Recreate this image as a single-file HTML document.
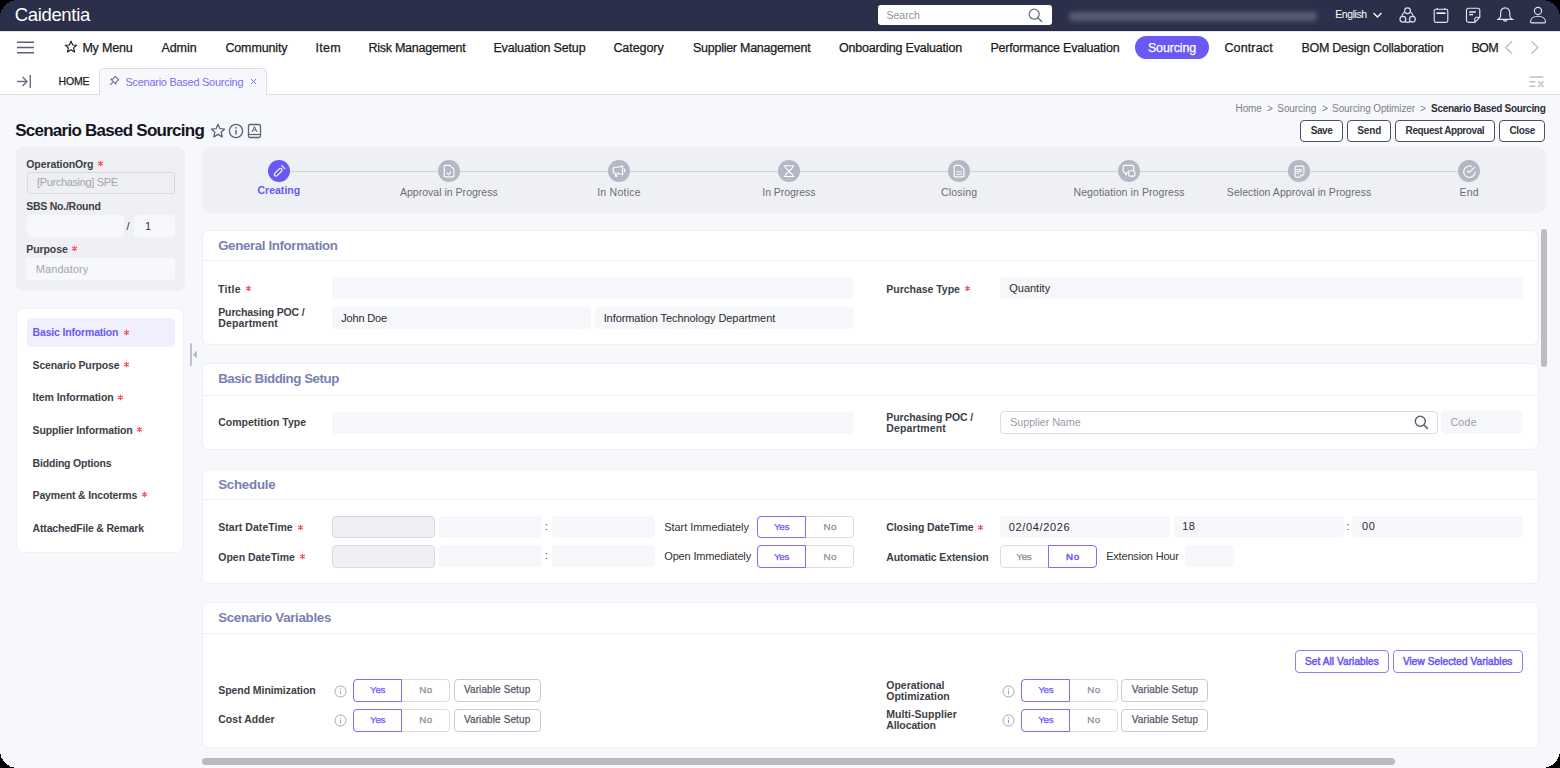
<!DOCTYPE html>
<html><head><meta charset="utf-8"><style>
html,body{margin:0;padding:0;background:#000;width:1560px;height:768px;overflow:hidden}
.app{position:absolute;left:0;top:0;width:1560px;height:768px;overflow:hidden;background:#f7f8fc;font-family:"Liberation Sans",sans-serif}
.t{position:absolute;white-space:nowrap}
.r{position:absolute}
</style></head><body><div class="app">
<div class="r" style="left:0.00px;top:0.00px;width:1560.00px;height:31.00px;background:#2c2f4a;"></div>
<div class="r" style="left:0.00px;top:30.00px;width:1560.00px;height:1.00px;background:#25283f;"></div>
<div class="t" style="left:14.67px;top:5.94px;font-size:18.5px;line-height:18.5px;color:#ffffff;letter-spacing:-0.327px;">Caidentia</div>
<div class="r" style="left:877.80px;top:4.90px;width:174.50px;height:20.30px;background:#ffffff;border-radius:3px;"></div>
<div class="t" style="left:886.48px;top:9.91px;font-size:10.5px;line-height:10.5px;color:#8c90a0;">Search</div>
<svg class="r" style="left:1028px;top:8px" width="15" height="15" viewBox="0 0 15 15"><circle cx="6.2" cy="6.2" r="5" fill="none" stroke="#6a6f84" stroke-width="1.3"/><line x1="9.8" y1="9.8" x2="13.6" y2="13.6" stroke="#6a6f84" stroke-width="1.4" stroke-linecap="round"/></svg>
<div class="r" style="left:1069px;top:11.5px;width:248px;height:9px;background:#5a5d75;filter:blur(2.5px);border-radius:3px"></div>
<div class="t" style="left:1335.27px;top:9.41px;font-size:10.5px;line-height:10.5px;color:#ffffff;letter-spacing:-0.415px;">English</div>
<svg class="r" style="left:1372px;top:11px" width="11" height="8" viewBox="0 0 11 8"><polyline points="1.5,2 5.5,6 9.5,2" fill="none" stroke="#fff" stroke-width="1.3"/></svg>
<svg class="r" style="left:1398px;top:6px" width="20" height="18" viewBox="0 0 20 18"><circle cx="9.5" cy="10.8" r="5.6" fill="none" stroke="#e4e5ea" stroke-width="1.15"/><circle cx="9.5" cy="4.7" r="2.9" fill="#2c2f4a" stroke="#e4e5ea" stroke-width="1.15"/><circle cx="4.9" cy="13.2" r="2.9" fill="#2c2f4a" stroke="#e4e5ea" stroke-width="1.15"/><circle cx="14.4" cy="13.2" r="2.9" fill="#2c2f4a" stroke="#e4e5ea" stroke-width="1.15"/></svg>
<svg class="r" style="left:1432px;top:6px" width="18" height="18" viewBox="0 0 18 18"><rect x="2.2" y="3.2" width="13.6" height="13.2" rx="1.8" fill="none" stroke="#e4e5ea" stroke-width="1.15"/><line x1="4.5" y1="7.2" x2="13.5" y2="7.2" stroke="#fff" stroke-width="1.6"/><line x1="5.2" y1="2" x2="5.2" y2="3.6" fill="none" stroke="#e4e5ea" stroke-width="1.15"/><line x1="12.8" y1="2" x2="12.8" y2="3.6" fill="none" stroke="#e4e5ea" stroke-width="1.15"/></svg>
<svg class="r" style="left:1465px;top:6px" width="17" height="18" viewBox="0 0 17 18"><path d="M3.5,2.2 H12.8 A2,2 0 0 1 14.8,4.2 V11.2 L9.8,16.3 H3.5 A2,2 0 0 1 1.5,14.3 V4.2 A2,2 0 0 1 3.5,2.2 Z" fill="none" stroke="#e4e5ea" stroke-width="1.15"/><path d="M14.8,11.2 H11.8 A2,2 0 0 0 9.8,13.2 V16.3" fill="none" stroke="#e4e5ea" stroke-width="1.15"/><line x1="4.3" y1="6" x2="10.8" y2="6" stroke="#fff" stroke-width="1.4"/><line x1="4.3" y1="8.6" x2="8" y2="8.6" stroke="#fff" stroke-width="1.4"/></svg>
<svg class="r" style="left:1497px;top:6px" width="17" height="18" viewBox="0 0 17 18"><path d="M8.2,1.8 C5.2,1.8 3.6,4.2 3.6,7.4 V9.8 C3.6,11.4 2.4,12.6 1.2,13.3 H15.2 C14,12.6 12.8,11.4 12.8,9.8 V7.4 C12.8,4.2 11.2,1.8 8.2,1.8 Z" fill="none" stroke="#e4e5ea" stroke-width="1.15"/><path d="M6.5,13.5 A1.7,1.7 0 0 0 9.9,13.5" fill="none" stroke="#e4e5ea" stroke-width="1.15"/></svg>
<svg class="r" style="left:1529px;top:5px" width="18" height="20" viewBox="0 0 18 20"><circle cx="9" cy="5.9" r="3.6" fill="none" stroke="#e4e5ea" stroke-width="1.15"/><path d="M1.5,16.8 C1.5,13.1 5,11.2 9,11.2 C13,11.2 16.5,13.1 16.5,16.8 C16.5,17.5 16,17.9 15.3,17.9 H2.7 C2,17.9 1.5,17.5 1.5,16.8 Z" fill="none" stroke="#e4e5ea" stroke-width="1.15"/></svg>
<div class="r" style="left:0.00px;top:31.00px;width:1560.00px;height:32.00px;background:#ffffff;"></div>
<div class="r" style="left:0.00px;top:31.00px;width:1560.00px;height:1.00px;background:#e4e5ea;"></div>
<svg class="r" style="left:17px;top:41px" width="18" height="13" viewBox="0 0 18 13"><path d="M0,1.2 H17 M0,6.5 H17 M0,11.8 H17" stroke="#5b6075" stroke-width="1.5"/></svg>
<svg class="r" style="left:64px;top:40px" width="14" height="14" viewBox="0 0 14 14"><path d="M7,1.2 L8.7,5 L12.7,5.3 L9.6,7.9 L10.6,11.9 L7,9.7 L3.4,11.9 L4.4,7.9 L1.3,5.3 L5.3,5 Z" fill="none" stroke="#222" stroke-width="1.2" stroke-linejoin="round"/></svg>
<div class="t" style="left:82.38px;top:41.72px;font-size:12.5px;line-height:12.5px;color:#1a1b24;letter-spacing:-0.192px;-webkit-text-stroke:0.25px currentColor;">My Menu</div>
<div class="t" style="left:161.38px;top:41.72px;font-size:12.5px;line-height:12.5px;color:#1a1b24;letter-spacing:-0.045px;-webkit-text-stroke:0.25px currentColor;">Admin</div>
<div class="t" style="left:225.38px;top:41.72px;font-size:12.5px;line-height:12.5px;color:#1a1b24;letter-spacing:-0.120px;-webkit-text-stroke:0.25px currentColor;">Community</div>
<div class="t" style="left:315.38px;top:41.72px;font-size:12.5px;line-height:12.5px;color:#1a1b24;letter-spacing:0.314px;-webkit-text-stroke:0.25px currentColor;">Item</div>
<div class="t" style="left:368.38px;top:41.72px;font-size:12.5px;line-height:12.5px;color:#1a1b24;letter-spacing:-0.249px;-webkit-text-stroke:0.25px currentColor;">Risk Management</div>
<div class="t" style="left:493.38px;top:41.72px;font-size:12.5px;line-height:12.5px;color:#1a1b24;letter-spacing:-0.151px;-webkit-text-stroke:0.25px currentColor;">Evaluation Setup</div>
<div class="t" style="left:613.38px;top:41.72px;font-size:12.5px;line-height:12.5px;color:#1a1b24;letter-spacing:-0.067px;-webkit-text-stroke:0.25px currentColor;">Category</div>
<div class="t" style="left:692.98px;top:41.72px;font-size:12.5px;line-height:12.5px;color:#1a1b24;letter-spacing:-0.258px;-webkit-text-stroke:0.25px currentColor;">Supplier Management</div>
<div class="t" style="left:839.08px;top:41.72px;font-size:12.5px;line-height:12.5px;color:#1a1b24;letter-spacing:-0.206px;-webkit-text-stroke:0.25px currentColor;">Onboarding Evaluation</div>
<div class="t" style="left:990.38px;top:41.72px;font-size:12.5px;line-height:12.5px;color:#1a1b24;letter-spacing:-0.198px;-webkit-text-stroke:0.25px currentColor;">Performance Evaluation</div>
<div class="t" style="left:1224.38px;top:41.72px;font-size:12.5px;line-height:12.5px;color:#1a1b24;letter-spacing:0.144px;-webkit-text-stroke:0.25px currentColor;">Contract</div>
<div class="t" style="left:1301.38px;top:41.72px;font-size:12.5px;line-height:12.5px;color:#1a1b24;letter-spacing:-0.249px;-webkit-text-stroke:0.25px currentColor;">BOM Design Collaboration</div>
<div class="t" style="left:1471.38px;top:41.72px;font-size:12.5px;line-height:12.5px;color:#1a1b24;letter-spacing:-0.611px;-webkit-text-stroke:0.25px currentColor;">BOM</div>
<div class="r" style="left:1135.00px;top:36.30px;width:74.00px;height:22.70px;background:#6a58f4;border-radius:11.4px;"></div>
<div class="t" style="left:1147.88px;top:41.72px;font-size:12.5px;line-height:12.5px;color:#ffffff;letter-spacing:-0.141px;-webkit-text-stroke:0.25px currentColor;">Sourcing</div>
<svg class="r" style="left:1504px;top:40px" width="10" height="15" viewBox="0 0 10 15"><polyline points="8,1.2 1.8,7.5 8,13.7" fill="none" stroke="#bfc3cf" stroke-width="1.6"/></svg>
<svg class="r" style="left:1530px;top:40px" width="10" height="15" viewBox="0 0 10 15"><polyline points="1.5,1.2 7.7,7.5 1.5,13.7" fill="none" stroke="#bfc3cf" stroke-width="1.6"/></svg>
<div class="r" style="left:0.00px;top:63.00px;width:1560.00px;height:32.00px;background:#ffffff;"></div>
<div class="r" style="left:0.00px;top:94.00px;width:1560.00px;height:1.00px;background:#dfe0e7;"></div>
<svg class="r" style="left:16px;top:74px" width="16" height="15" viewBox="0 0 16 15"><path d="M1,7.5 H11 M6.5,3 L11,7.5 L6.5,12" fill="none" stroke="#6b7085" stroke-width="1.4"/><line x1="14.3" y1="1" x2="14.3" y2="14" stroke="#6b7085" stroke-width="1.4"/></svg>
<div class="t" style="left:58.48px;top:76.01px;font-size:10.5px;line-height:10.5px;color:#1a1b24;letter-spacing:-0.150px;-webkit-text-stroke:0.25px currentColor;">HOME</div>
<div class="r" style="left:99px;top:68px;width:168px;height:27px;background:#f7f8fc;border:1px solid #dcdde5;border-bottom:none;border-radius:5px 5px 0 0;box-sizing:border-box"></div>
<svg class="r" style="left:109px;top:75px" width="11" height="11" viewBox="0 0 11 11"><path d="M6.2,1.2 L9.8,4.8 L8.6,5.4 L6.8,7.6 L6.9,9.2 L1.8,4.1 L3.4,4.2 L5.6,2.4 Z M3.9,7.1 L1.2,9.8" fill="none" stroke="#6b7085" stroke-width="1.1" stroke-linejoin="round"/></svg>
<div class="t" style="left:125.45px;top:76.69px;font-size:11px;line-height:11px;color:#7b6cf6;letter-spacing:-0.274px;">Scenario Based Sourcing</div>
<svg class="r" style="left:250.2px;top:78.4px" width="7" height="7" viewBox="0 0 7 7"><path d="M1,1 L6,6 M6,1 L1,6" stroke="#8275f5" stroke-width="1"/></svg>
<svg class="r" style="left:1528px;top:75px" width="17" height="14" viewBox="0 0 17 14"><path d="M1.5,2.1 H15.2 M1.5,6.8 H7.4 M1.5,11.2 H7.4 M10.1,6.3 L15.4,12.1 M15.4,6.3 L10.1,12.1" fill="none" stroke="#bcc0cc" stroke-width="1.5"/></svg>
<div class="t" style="left:15.15px;top:122.11px;font-size:17px;line-height:17px;color:#14151c;font-weight:700;letter-spacing:-0.739px;">Scenario Based Sourcing</div>
<svg class="r" style="left:210px;top:123px" width="16" height="16" viewBox="0 0 16 16"><path d="M8,1.3 L10,5.7 L14.7,6.1 L11.1,9.2 L12.2,13.9 L8,11.4 L3.8,13.9 L4.9,9.2 L1.3,6.1 L6,5.7 Z" fill="none" stroke="#5d6278" stroke-width="1.3" stroke-linejoin="round"/></svg>
<svg class="r" style="left:228px;top:123px" width="16" height="16" viewBox="0 0 16 16"><circle cx="8" cy="8" r="6.6" fill="none" stroke="#5d6278" stroke-width="1.3"/><line x1="8" y1="7" x2="8" y2="11.5" stroke="#5d6278" stroke-width="1.5"/><circle cx="8" cy="4.8" r="0.9" fill="#5d6278"/></svg>
<svg class="r" style="left:247px;top:123px" width="15" height="16" viewBox="0 0 15 16"><rect x="1.5" y="1.5" width="12" height="13" rx="1.5" fill="none" stroke="#5d6278" stroke-width="1.3"/><line x1="1.5" y1="11.5" x2="13.5" y2="11.5" stroke="#5d6278" stroke-width="1.2"/><path d="M5,9 L7.5,3.5 L10,9 M6,7 H9" fill="none" stroke="#5d6278" stroke-width="1"/></svg>
<div class="t" style="left:1235.50px;top:103.53px;font-size:10px;line-height:10px;color:#7c7f8c;letter-spacing:-0.092px;">Home</div>
<div class="t" style="left:1267.00px;top:103.53px;font-size:10px;line-height:10px;color:#7c7f8c;">&gt;</div>
<div class="t" style="left:1277.30px;top:103.53px;font-size:10px;line-height:10px;color:#7c7f8c;letter-spacing:-0.081px;">Sourcing</div>
<div class="t" style="left:1322.00px;top:103.53px;font-size:10px;line-height:10px;color:#7c7f8c;">&gt;</div>
<div class="t" style="left:1332.10px;top:103.53px;font-size:10px;line-height:10px;color:#7c7f8c;letter-spacing:-0.120px;">Sourcing Optimizer</div>
<div class="t" style="left:1420.00px;top:103.53px;font-size:10px;line-height:10px;color:#7c7f8c;">&gt;</div>
<div class="t" style="left:1431.10px;top:103.53px;font-size:10px;line-height:10px;color:#2b2d38;font-weight:700;letter-spacing:-0.293px;">Scenario Based Sourcing</div>
<div class="r" style="left:1300.40px;top:119.50px;width:42.80px;height:22.20px;background:#ffffff;border:1px solid #4d5168;box-sizing:border-box;border-radius:4px;"></div>
<div class="t" style="left:1310.80px;top:125.84px;font-size:10px;line-height:10px;color:#30333f;font-weight:700;letter-spacing:-0.452px;">Save</div>
<div class="r" style="left:1347.30px;top:119.50px;width:44.10px;height:22.20px;background:#ffffff;border:1px solid #4d5168;box-sizing:border-box;border-radius:4px;"></div>
<div class="t" style="left:1357.35px;top:125.84px;font-size:10px;line-height:10px;color:#30333f;font-weight:700;letter-spacing:-0.150px;">Send</div>
<div class="r" style="left:1395.00px;top:119.50px;width:100.20px;height:22.20px;background:#ffffff;border:1px solid #4d5168;box-sizing:border-box;border-radius:4px;"></div>
<div class="t" style="left:1405.60px;top:125.84px;font-size:10px;line-height:10px;color:#30333f;font-weight:700;letter-spacing:-0.413px;">Request Approval</div>
<div class="r" style="left:1499.30px;top:119.50px;width:46.20px;height:22.20px;background:#ffffff;border:1px solid #4d5168;box-sizing:border-box;border-radius:4px;"></div>
<div class="t" style="left:1509.40px;top:125.84px;font-size:10px;line-height:10px;color:#30333f;font-weight:700;letter-spacing:-0.308px;">Close</div>
<div class="r" style="left:16.00px;top:147.00px;width:169.00px;height:143.60px;background:#eff0f4;border-radius:8px;"></div>
<div class="t" style="left:26.28px;top:158.51px;font-size:10.5px;line-height:10.5px;color:#3c3e47;font-weight:700;letter-spacing:-0.091px;">OperationOrg</div>
<svg class="r" style="left:97.10px;top:159.90px" width="7" height="7" viewBox="-3.5 -3.5 7 7"><path d="M0,-2.8 V2.8 M-2.45,-1.4 L2.45,1.4 M-2.45,1.4 L2.45,-1.4" stroke="#f5535c" stroke-width="1.15"/></svg>
<div class="r" style="left:26.50px;top:171.50px;width:148.50px;height:22.00px;background:#eeeff3;border:1px solid #d9dae1;box-sizing:border-box;border-radius:3px;"></div>
<div class="t" style="left:36.95px;top:177.19px;font-size:11px;line-height:11px;color:#a3a5ae;letter-spacing:-0.341px;">[Purchasing] SPE</div>
<div class="t" style="left:26.28px;top:201.11px;font-size:10.5px;line-height:10.5px;color:#3c3e47;font-weight:700;letter-spacing:-0.252px;">SBS No./Round</div>
<div class="r" style="left:26.50px;top:214.80px;width:97.50px;height:22.50px;background:#f7f8fb;border-radius:3px;"></div>
<div class="r" style="left:134.00px;top:214.80px;width:41.00px;height:22.50px;background:#f7f8fb;border-radius:3px;"></div>
<div class="t" style="left:126.45px;top:220.69px;font-size:11px;line-height:11px;color:#333;">/</div>
<div class="t" style="left:144.95px;top:220.69px;font-size:11px;line-height:11px;color:#333;">1</div>
<div class="t" style="left:26.28px;top:244.01px;font-size:10.5px;line-height:10.5px;color:#3c3e47;font-weight:700;letter-spacing:-0.077px;">Purpose</div>
<svg class="r" style="left:71.20px;top:245.40px" width="7" height="7" viewBox="-3.5 -3.5 7 7"><path d="M0,-2.8 V2.8 M-2.45,-1.4 L2.45,1.4 M-2.45,1.4 L2.45,-1.4" stroke="#f5535c" stroke-width="1.15"/></svg>
<div class="r" style="left:26.40px;top:257.80px;width:148.60px;height:22.40px;background:#f7f8fb;border-radius:3px;"></div>
<div class="t" style="left:35.85px;top:263.99px;font-size:11px;line-height:11px;color:#a3a5ae;letter-spacing:0.066px;">Mandatory</div>
<div class="r" style="left:16.40px;top:308.00px;width:167.80px;height:244.50px;background:#ffffff;border:1px solid #eff0f4;box-sizing:border-box;border-radius:6px;"></div>
<div class="r" style="left:26.80px;top:318.00px;width:147.80px;height:28.80px;background:#f0effd;border-radius:5px;"></div>
<div class="t" style="left:32.58px;top:327.31px;font-size:10.5px;line-height:10.5px;color:#6a58f4;font-weight:700;letter-spacing:-0.171px;">Basic Information</div>
<svg class="r" style="left:122.50px;top:328.70px" width="7" height="7" viewBox="-3.5 -3.5 7 7"><path d="M0,-2.8 V2.8 M-2.45,-1.4 L2.45,1.4 M-2.45,1.4 L2.45,-1.4" stroke="#f5535c" stroke-width="1.15"/></svg>
<div class="t" style="left:32.58px;top:359.86px;font-size:10.5px;line-height:10.5px;color:#3c3e47;font-weight:700;letter-spacing:-0.149px;">Scenario Purpose</div>
<svg class="r" style="left:123.20px;top:361.25px" width="7" height="7" viewBox="-3.5 -3.5 7 7"><path d="M0,-2.8 V2.8 M-2.45,-1.4 L2.45,1.4 M-2.45,1.4 L2.45,-1.4" stroke="#f5535c" stroke-width="1.15"/></svg>
<div class="t" style="left:32.58px;top:392.41px;font-size:10.5px;line-height:10.5px;color:#3c3e47;font-weight:700;letter-spacing:-0.074px;">Item Information</div>
<svg class="r" style="left:117.30px;top:393.80px" width="7" height="7" viewBox="-3.5 -3.5 7 7"><path d="M0,-2.8 V2.8 M-2.45,-1.4 L2.45,1.4 M-2.45,1.4 L2.45,-1.4" stroke="#f5535c" stroke-width="1.15"/></svg>
<div class="t" style="left:32.58px;top:424.96px;font-size:10.5px;line-height:10.5px;color:#3c3e47;font-weight:700;letter-spacing:-0.133px;">Supplier Information</div>
<svg class="r" style="left:136.30px;top:426.35px" width="7" height="7" viewBox="-3.5 -3.5 7 7"><path d="M0,-2.8 V2.8 M-2.45,-1.4 L2.45,1.4 M-2.45,1.4 L2.45,-1.4" stroke="#f5535c" stroke-width="1.15"/></svg>
<div class="t" style="left:32.58px;top:457.51px;font-size:10.5px;line-height:10.5px;color:#3c3e47;font-weight:700;letter-spacing:-0.186px;">Bidding Options</div>
<div class="t" style="left:32.58px;top:490.06px;font-size:10.5px;line-height:10.5px;color:#3c3e47;font-weight:700;letter-spacing:-0.151px;">Payment &amp; Incoterms</div>
<svg class="r" style="left:141.10px;top:491.45px" width="7" height="7" viewBox="-3.5 -3.5 7 7"><path d="M0,-2.8 V2.8 M-2.45,-1.4 L2.45,1.4 M-2.45,1.4 L2.45,-1.4" stroke="#f5535c" stroke-width="1.15"/></svg>
<div class="t" style="left:32.58px;top:522.61px;font-size:10.5px;line-height:10.5px;color:#3c3e47;font-weight:700;letter-spacing:-0.170px;">AttachedFile &amp; Remark</div>
<div class="r" style="left:189.80px;top:343.00px;width:1.80px;height:22.50px;background:#bfc2cf;border-radius:1px;"></div>
<svg class="r" style="left:192px;top:350px" width="6" height="9" viewBox="0 0 6 9"><polygon points="5,0.5 0.8,4.5 5,8.5" fill="#b9bccb"/></svg>
<div class="r" style="left:202.00px;top:147.00px;width:1344.00px;height:65.60px;background:#eff0f4;border-radius:8px;"></div>
<div class="r" style="left:278.00px;top:171.00px;width:1190.00px;height:1.00px;background:#cfd1dc;"></div>
<div class="r" style="left:267.60px;top:159.9px;width:22.4px;height:22.4px;border-radius:50%;background:#6a58f4"></div>
<div class="t" style="left:257.43px;top:185.11px;font-size:10.5px;line-height:10.5px;color:#6a58f4;font-weight:700;letter-spacing:0.023px;">Creating</div>
<div class="r" style="left:437.64px;top:159.9px;width:22.4px;height:22.4px;border-radius:50%;background:#b4b7c4"></div>
<div class="t" style="left:399.92px;top:186.91px;font-size:10.5px;line-height:10.5px;color:#6a6c78;letter-spacing:0.020px;">Approval in Progress</div>
<div class="r" style="left:607.68px;top:159.9px;width:22.4px;height:22.4px;border-radius:50%;background:#b4b7c4"></div>
<div class="t" style="left:597.21px;top:186.91px;font-size:10.5px;line-height:10.5px;color:#6a6c78;letter-spacing:0.239px;">In Notice</div>
<div class="r" style="left:777.72px;top:159.9px;width:22.4px;height:22.4px;border-radius:50%;background:#b4b7c4"></div>
<div class="t" style="left:762.30px;top:186.91px;font-size:10.5px;line-height:10.5px;color:#6a6c78;letter-spacing:-0.044px;">In Progress</div>
<div class="r" style="left:947.76px;top:159.9px;width:22.4px;height:22.4px;border-radius:50%;background:#b4b7c4"></div>
<div class="t" style="left:940.94px;top:186.91px;font-size:10.5px;line-height:10.5px;color:#6a6c78;letter-spacing:0.172px;">Closing</div>
<div class="r" style="left:1117.80px;top:159.9px;width:22.4px;height:22.4px;border-radius:50%;background:#b4b7c4"></div>
<div class="t" style="left:1073.47px;top:186.91px;font-size:10.5px;line-height:10.5px;color:#6a6c78;letter-spacing:0.087px;">Negotiation in Progress</div>
<div class="r" style="left:1287.84px;top:159.9px;width:22.4px;height:22.4px;border-radius:50%;background:#b4b7c4"></div>
<div class="t" style="left:1226.87px;top:186.91px;font-size:10.5px;line-height:10.5px;color:#6a6c78;letter-spacing:0.047px;">Selection Approval in Progress</div>
<div class="r" style="left:1457.88px;top:159.9px;width:22.4px;height:22.4px;border-radius:50%;background:#b4b7c4"></div>
<div class="t" style="left:1459.61px;top:186.91px;font-size:10.5px;line-height:10.5px;color:#6a6c78;letter-spacing:0.134px;">End</div>
<svg class="r" style="left:270.80px;top:163.1px" width="16" height="16" viewBox="-8 -8 16 16"><g transform="rotate(-45 -0.8 1.2)"><rect x="-5.6" y="-0.4" width="9.6" height="3.2" rx="1.6" fill="none" stroke="#ffffff" stroke-width="1.15" stroke-linejoin="round" stroke-linecap="round"/></g><path d="M2.8,-5.4 L5.8,-2.4" fill="none" stroke="#ffffff" stroke-width="1.15" stroke-linejoin="round" stroke-linecap="round"/></svg>
<svg class="r" style="left:440.84px;top:163.1px" width="16" height="16" viewBox="-8 -8 16 16"><path d="M-3.6,-5.7 H1 L4.9,-1.8 V4.7 A1.2,1.2 0 0 1 3.7,5.9 H-3.6 A1.2,1.2 0 0 1 -4.8,4.7 V-4.5 A1.2,1.2 0 0 1 -3.6,-5.7 Z" fill="none" stroke="#ffffff" stroke-width="1.15" stroke-linejoin="round" stroke-linecap="round"/><path d="M-1.9,2.2 L-0.2,3.6 L1.9,0.9" fill="none" stroke="#ffffff" stroke-width="1.15" stroke-linejoin="round" stroke-linecap="round"/></svg>
<svg class="r" style="left:610.88px;top:163.1px" width="16" height="16" viewBox="-8 -8 16 16"><path d="M-4.8,-3.8 H-1.5 L3.6,-4.9 V3.8 L-1.5,2 H-1.8 L-2.4,5.3 H-3.3 L-3.9,2 H-4.8 A1,1 0 0 1 -5.8,1 V-2.8 A1,1 0 0 1 -4.8,-3.8 Z M5.6,-2 V0.6" fill="none" stroke="#ffffff" stroke-width="1.15" stroke-linejoin="round" stroke-linecap="round"/></svg>
<svg class="r" style="left:780.92px;top:163.1px" width="16" height="16" viewBox="-8 -8 16 16"><path d="M-4.9,-5.3 H4.9 M-4.9,5.5 H4.9 M-4,-5.3 C-4,-2 -0.5,-1 0,0.2 C0.5,-1 4,-2 4,-5.3 M-4,5.5 C-4,2.4 -0.5,1.4 0,0.2 C0.5,1.4 4,2.4 4,5.5" fill="none" stroke="#ffffff" stroke-width="1.15" stroke-linejoin="round" stroke-linecap="round"/></svg>
<svg class="r" style="left:950.96px;top:163.1px" width="16" height="16" viewBox="-8 -8 16 16"><path d="M-3.6,-5.7 H1.2 L4.9,-2 V4.7 A1.2,1.2 0 0 1 3.7,5.9 H-3.6 A1.2,1.2 0 0 1 -4.8,4.7 V-4.5 A1.2,1.2 0 0 1 -3.6,-5.7 Z M-2.2,0.7 H2.5 M-2.2,3.2 H2.5" fill="none" stroke="#ffffff" stroke-width="1.15" stroke-linejoin="round" stroke-linecap="round"/></svg>
<svg class="r" style="left:1121.00px;top:163.1px" width="16" height="16" viewBox="-8 -8 16 16"><path d="M4.7,-0.3 V-4.4 A1.2,1.2 0 0 0 3.5,-5.6 H-4.6 A1.2,1.2 0 0 0 -5.8,-4.4 V0 A1.2,1.2 0 0 0 -4.6,1.2 H-4.2 L-3,3.9 L-1.8,1.2 H-0.3" fill="none" stroke="#ffffff" stroke-width="1.15" stroke-linejoin="round" stroke-linecap="round"/><path d="M0.9,-0.3 H4.7 A1.2,1.2 0 0 1 5.9,0.9 V3.9 A1.2,1.2 0 0 1 4.7,5.1 H4.4 L3.9,5.5 L3.3,5.1 H0.9 A1.2,1.2 0 0 1 -0.3,3.9 V0.9 A1.2,1.2 0 0 1 0.9,-0.3 Z" fill="none" stroke="#ffffff" stroke-width="1.15" stroke-linejoin="round" stroke-linecap="round"/></svg>
<svg class="r" style="left:1291.04px;top:163.1px" width="16" height="16" viewBox="-8 -8 16 16"><path d="M1.2,6.1 H-2.7 A1.2,1.2 0 0 1 -3.9,4.9 V-3.7 A1.2,1.2 0 0 1 -2.7,-4.9 H3.7 A1.2,1.2 0 0 1 4.9,-3.7 V1.5 M-2.2,-1.5 H2.5 M-2.2,0.3 H2.5 M-2.2,2.2 H-0.2 M1.5,4.2 L2.5,5.2 L4.9,3" fill="none" stroke="#ffffff" stroke-width="1.15" stroke-linejoin="round" stroke-linecap="round"/></svg>
<svg class="r" style="left:1461.08px;top:163.1px" width="16" height="16" viewBox="-8 -8 16 16"><path d="M2.4,-4.6 A5.7,5.7 0 1 0 6.1,1.2" fill="none" stroke="#ffffff" stroke-width="1.15" stroke-linejoin="round" stroke-linecap="round"/><path d="M-1.7,0.2 L0.2,1.6 L5.3,-3.6" fill="none" stroke="#ffffff" stroke-width="1.15" stroke-linejoin="round" stroke-linecap="round"/></svg>
<div class="r" style="left:201.50px;top:229.60px;width:1337.50px;height:115.60px;background:#ffffff;border:1px solid #eef0f4;box-sizing:border-box;border-radius:7px;"></div>
<div class="r" style="left:203.00px;top:260.30px;width:1335.00px;height:1.00px;background:#eef0f4;"></div>
<div class="t" style="left:218.14px;top:238.74px;font-size:13.3px;line-height:13.3px;color:#7a7fb3;font-weight:700;letter-spacing:-0.363px;">General Information</div>
<div class="r" style="left:201.50px;top:363.00px;width:1337.50px;height:87.00px;background:#ffffff;border:1px solid #eef0f4;box-sizing:border-box;border-radius:7px;"></div>
<div class="r" style="left:203.00px;top:394.50px;width:1335.00px;height:1.00px;background:#eef0f4;"></div>
<div class="t" style="left:218.14px;top:372.14px;font-size:13.3px;line-height:13.3px;color:#7a7fb3;font-weight:700;letter-spacing:-0.449px;">Basic Bidding Setup</div>
<div class="r" style="left:201.50px;top:468.80px;width:1337.50px;height:115.10px;background:#ffffff;border:1px solid #eef0f4;box-sizing:border-box;border-radius:7px;"></div>
<div class="r" style="left:203.00px;top:499.30px;width:1335.00px;height:1.00px;background:#eef0f4;"></div>
<div class="t" style="left:218.14px;top:477.94px;font-size:13.3px;line-height:13.3px;color:#7a7fb3;font-weight:700;letter-spacing:-0.229px;">Schedule</div>
<div class="r" style="left:201.50px;top:601.60px;width:1337.50px;height:146.10px;background:#ffffff;border:1px solid #eef0f4;box-sizing:border-box;border-radius:7px;"></div>
<div class="r" style="left:203.00px;top:633.30px;width:1335.00px;height:1.00px;background:#eef0f4;"></div>
<div class="t" style="left:218.14px;top:610.74px;font-size:13.3px;line-height:13.3px;color:#7a7fb3;font-weight:700;letter-spacing:-0.298px;">Scenario Variables</div>
<div class="t" style="left:217.97px;top:283.91px;font-size:10.5px;line-height:10.5px;color:#3c3e47;font-weight:700;letter-spacing:0.314px;">Title</div>
<svg class="r" style="left:244.50px;top:285.30px" width="7" height="7" viewBox="-3.5 -3.5 7 7"><path d="M0,-2.8 V2.8 M-2.45,-1.4 L2.45,1.4 M-2.45,1.4 L2.45,-1.4" stroke="#f5535c" stroke-width="1.15"/></svg>
<div class="r" style="left:332.00px;top:277.20px;width:522.00px;height:22.30px;background:#f6f7fb;border-radius:4px;"></div>
<div class="t" style="left:218.28px;top:307.11px;font-size:10.5px;line-height:10.5px;color:#3c3e47;font-weight:700;letter-spacing:-0.149px;">Purchasing POC /</div>
<div class="t" style="left:218.28px;top:317.71px;font-size:10.5px;line-height:10.5px;color:#3c3e47;font-weight:700;letter-spacing:0.123px;">Department</div>
<div class="r" style="left:332.00px;top:306.60px;width:259.00px;height:22.30px;background:#f6f7fb;border-radius:4px;"></div>
<div class="r" style="left:594.60px;top:306.60px;width:259.40px;height:22.30px;background:#f6f7fb;border-radius:4px;"></div>
<div class="t" style="left:341.25px;top:312.69px;font-size:11px;line-height:11px;color:#2a2a2a;letter-spacing:-0.184px;">John Doe</div>
<div class="t" style="left:603.65px;top:312.69px;font-size:11px;line-height:11px;color:#2a2a2a;letter-spacing:-0.077px;">Information Technology Department</div>
<div class="t" style="left:886.27px;top:283.91px;font-size:10.5px;line-height:10.5px;color:#3c3e47;font-weight:700;letter-spacing:-0.023px;">Purchase Type</div>
<svg class="r" style="left:963.90px;top:285.30px" width="7" height="7" viewBox="-3.5 -3.5 7 7"><path d="M0,-2.8 V2.8 M-2.45,-1.4 L2.45,1.4 M-2.45,1.4 L2.45,-1.4" stroke="#f5535c" stroke-width="1.15"/></svg>
<div class="r" style="left:1000.00px;top:277.20px;width:522.70px;height:22.30px;background:#f6f7fb;border-radius:4px;"></div>
<div class="t" style="left:1009.25px;top:283.49px;font-size:11px;line-height:11px;color:#2a2a2a;letter-spacing:-0.009px;">Quantity</div>
<div class="t" style="left:218.28px;top:417.41px;font-size:10.5px;line-height:10.5px;color:#3c3e47;font-weight:700;letter-spacing:-0.009px;">Competition Type</div>
<div class="r" style="left:332.00px;top:411.70px;width:522.00px;height:22.30px;background:#f6f7fb;border-radius:4px;"></div>
<div class="t" style="left:886.27px;top:412.21px;font-size:10.5px;line-height:10.5px;color:#3c3e47;font-weight:700;letter-spacing:-0.116px;">Purchasing POC /</div>
<div class="t" style="left:886.27px;top:422.81px;font-size:10.5px;line-height:10.5px;color:#3c3e47;font-weight:700;letter-spacing:0.123px;">Department</div>
<div class="r" style="left:999.60px;top:411.30px;width:438.10px;height:22.50px;background:#ffffff;border:1px solid #dcdde4;box-sizing:border-box;border-radius:4px;"></div>
<div class="t" style="left:1010.16px;top:417.26px;font-size:10.8px;line-height:10.8px;color:#9a9ca8;letter-spacing:-0.071px;">Supplier Name</div>
<svg class="r" style="left:1413px;top:414px" width="16" height="16" viewBox="0 0 16 16"><circle cx="7.3" cy="7.3" r="5" fill="none" stroke="#5d6278" stroke-width="1.5"/><line x1="11" y1="11" x2="14.4" y2="14.4" stroke="#5d6278" stroke-width="1.6" stroke-linecap="round"/></svg>
<div class="r" style="left:1441.10px;top:411.30px;width:81.30px;height:22.30px;background:#f6f7fb;border-radius:4px;"></div>
<div class="t" style="left:1450.47px;top:417.11px;font-size:10.5px;line-height:10.5px;color:#9a9ca8;letter-spacing:0.316px;">Code</div>
<div class="t" style="left:218.28px;top:522.11px;font-size:10.5px;line-height:10.5px;color:#3c3e47;font-weight:700;letter-spacing:0.041px;">Start DateTime</div>
<svg class="r" style="left:297.30px;top:523.50px" width="7" height="7" viewBox="-3.5 -3.5 7 7"><path d="M0,-2.8 V2.8 M-2.45,-1.4 L2.45,1.4 M-2.45,1.4 L2.45,-1.4" stroke="#f5535c" stroke-width="1.15"/></svg>
<div class="r" style="left:332.10px;top:515.80px;width:102.70px;height:22.50px;background:#eff0f4;border:1px solid #d9dae2;box-sizing:border-box;border-radius:4px;"></div>
<div class="r" style="left:438.70px;top:515.80px;width:103.10px;height:22.30px;background:#f6f7fb;border-radius:4px;"></div>
<div class="t" style="left:545.00px;top:521.53px;font-size:10px;line-height:10px;color:#333;">:</div>
<div class="r" style="left:552.00px;top:515.80px;width:102.60px;height:22.30px;background:#f6f7fb;border-radius:4px;"></div>
<div class="t" style="left:664.25px;top:521.69px;font-size:11px;line-height:11px;color:#333;letter-spacing:-0.055px;">Start Immediately</div>
<div class="r" style="left:757.20px;top:515.80px;width:96.60px;height:22.60px;background:#ffffff;border:1px solid #dcdde4;box-sizing:border-box;border-radius:4px;"></div>
<div class="r" style="left:757.20px;top:515.80px;width:48.70px;height:22.60px;background:#ffffff;border:1px solid #7d6ff5;box-sizing:border-box;border-radius:4px 0 0 4px;border-radius:4px 0 0 4px;"></div>
<div class="t" style="left:773.91px;top:522.10px;font-size:9.8px;line-height:9.8px;color:#6a58f4;letter-spacing:-0.304px;-webkit-text-stroke:0.25px currentColor;">Yes</div>
<div class="t" style="left:823.51px;top:522.10px;font-size:9.8px;line-height:9.8px;color:#8a8c96;letter-spacing:0.453px;-webkit-text-stroke:0.25px currentColor;">No</div>
<div class="t" style="left:218.28px;top:551.81px;font-size:10.5px;line-height:10.5px;color:#3c3e47;font-weight:700;letter-spacing:-0.015px;">Open DateTime</div>
<svg class="r" style="left:298.60px;top:553.20px" width="7" height="7" viewBox="-3.5 -3.5 7 7"><path d="M0,-2.8 V2.8 M-2.45,-1.4 L2.45,1.4 M-2.45,1.4 L2.45,-1.4" stroke="#f5535c" stroke-width="1.15"/></svg>
<div class="r" style="left:332.10px;top:545.20px;width:102.70px;height:22.50px;background:#eff0f4;border:1px solid #d9dae2;box-sizing:border-box;border-radius:4px;"></div>
<div class="r" style="left:438.70px;top:545.20px;width:103.10px;height:22.30px;background:#f6f7fb;border-radius:4px;"></div>
<div class="t" style="left:545.00px;top:551.24px;font-size:10px;line-height:10px;color:#333;">:</div>
<div class="r" style="left:552.00px;top:545.20px;width:102.60px;height:22.30px;background:#f6f7fb;border-radius:4px;"></div>
<div class="t" style="left:664.25px;top:551.39px;font-size:11px;line-height:11px;color:#333;letter-spacing:-0.158px;">Open Immediately</div>
<div class="r" style="left:757.20px;top:545.20px;width:96.60px;height:22.60px;background:#ffffff;border:1px solid #dcdde4;box-sizing:border-box;border-radius:4px;"></div>
<div class="r" style="left:757.20px;top:545.20px;width:48.70px;height:22.60px;background:#ffffff;border:1px solid #7d6ff5;box-sizing:border-box;border-radius:4px 0 0 4px;border-radius:4px 0 0 4px;"></div>
<div class="t" style="left:773.91px;top:551.80px;font-size:9.8px;line-height:9.8px;color:#6a58f4;letter-spacing:-0.304px;-webkit-text-stroke:0.25px currentColor;">Yes</div>
<div class="t" style="left:823.51px;top:551.80px;font-size:9.8px;line-height:9.8px;color:#8a8c96;letter-spacing:0.453px;-webkit-text-stroke:0.25px currentColor;">No</div>
<div class="t" style="left:886.27px;top:522.11px;font-size:10.5px;line-height:10.5px;color:#3c3e47;font-weight:700;letter-spacing:-0.076px;">Closing DateTime</div>
<svg class="r" style="left:977.30px;top:523.50px" width="7" height="7" viewBox="-3.5 -3.5 7 7"><path d="M0,-2.8 V2.8 M-2.45,-1.4 L2.45,1.4 M-2.45,1.4 L2.45,-1.4" stroke="#f5535c" stroke-width="1.15"/></svg>
<div class="r" style="left:999.60px;top:515.80px;width:170.40px;height:22.30px;background:#f6f7fb;border-radius:4px;"></div>
<div class="t" style="left:1008.85px;top:521.69px;font-size:11px;line-height:11px;color:#2a2a2a;letter-spacing:0.638px;">02/04/2026</div>
<div class="r" style="left:1173.50px;top:515.80px;width:170.00px;height:22.30px;background:#f6f7fb;border-radius:4px;"></div>
<div class="t" style="left:1182.25px;top:520.69px;font-size:11px;line-height:11px;color:#2a2a2a;letter-spacing:0.364px;">18</div>
<div class="t" style="left:1346.50px;top:521.53px;font-size:10px;line-height:10px;color:#333;">:</div>
<div class="r" style="left:1352.30px;top:515.80px;width:170.40px;height:22.30px;background:#f6f7fb;border-radius:4px;"></div>
<div class="t" style="left:1361.95px;top:520.69px;font-size:11px;line-height:11px;color:#2a2a2a;letter-spacing:0.764px;">00</div>
<div class="t" style="left:886.27px;top:551.81px;font-size:10.5px;line-height:10.5px;color:#3c3e47;font-weight:700;letter-spacing:-0.116px;">Automatic Extension</div>
<div class="r" style="left:999.60px;top:545.20px;width:97.40px;height:22.60px;background:#ffffff;border:1px solid #dcdde4;box-sizing:border-box;border-radius:4px;"></div>
<div class="r" style="left:1048.30px;top:545.20px;width:48.70px;height:22.60px;background:#ffffff;border:1px solid #7d6ff5;box-sizing:border-box;border-radius:0 4px 4px 0;"></div>
<div class="t" style="left:1016.31px;top:551.80px;font-size:9.8px;line-height:9.8px;color:#8a8c96;letter-spacing:-0.304px;-webkit-text-stroke:0.25px currentColor;">Yes</div>
<div class="t" style="left:1066.11px;top:551.80px;font-size:9.8px;line-height:9.8px;color:#6a58f4;letter-spacing:0.453px;-webkit-text-stroke:0.45px currentColor;">No</div>
<div class="t" style="left:1106.15px;top:551.39px;font-size:11px;line-height:11px;color:#333;letter-spacing:-0.185px;">Extension Hour</div>
<div class="r" style="left:1185.00px;top:545.20px;width:48.70px;height:22.30px;background:#f6f7fb;border-radius:4px;"></div>
<div class="r" style="left:1294.80px;top:650.30px;width:94.20px;height:22.60px;background:#ffffff;border:1px solid #8d80f5;box-sizing:border-box;border-radius:4px;"></div>
<div class="t" style="left:1305.10px;top:656.73px;font-size:10px;line-height:10px;color:#6a58f4;letter-spacing:0.095px;-webkit-text-stroke:0.5px currentColor;">Set All Variables</div>
<div class="r" style="left:1392.60px;top:650.30px;width:130.10px;height:22.60px;background:#ffffff;border:1px solid #8d80f5;box-sizing:border-box;border-radius:4px;"></div>
<div class="t" style="left:1402.95px;top:656.73px;font-size:10px;line-height:10px;color:#6a58f4;letter-spacing:0.113px;-webkit-text-stroke:0.5px currentColor;">View Selected Variables</div>
<div class="t" style="left:218.28px;top:684.61px;font-size:10.5px;line-height:10.5px;color:#3c3e47;font-weight:700;letter-spacing:-0.067px;">Spend Minimization</div>
<svg class="r" style="left:334.20px;top:684.70px" width="13" height="13" viewBox="0 0 13 13"><circle cx="6.5" cy="6.5" r="5.5" fill="none" stroke="#a4a7b4" stroke-width="1"/><line x1="6.5" y1="5.6" x2="6.5" y2="9.4" stroke="#a4a7b4" stroke-width="1.1"/><circle cx="6.5" cy="3.9" r="0.7" fill="#a4a7b4"/></svg>
<div class="r" style="left:353.20px;top:679.20px;width:96.60px;height:22.80px;background:#ffffff;border:1px solid #dcdde4;box-sizing:border-box;border-radius:4px;"></div>
<div class="r" style="left:353.20px;top:679.20px;width:48.60px;height:22.80px;background:#ffffff;border:1px solid #7d6ff5;box-sizing:border-box;border-radius:4px 0 0 4px;"></div>
<div class="t" style="left:370.11px;top:685.20px;font-size:9.8px;line-height:9.8px;color:#6a58f4;letter-spacing:-0.304px;-webkit-text-stroke:0.25px currentColor;">Yes</div>
<div class="t" style="left:419.21px;top:685.20px;font-size:9.8px;line-height:9.8px;color:#8a8c96;letter-spacing:0.453px;-webkit-text-stroke:0.25px currentColor;">No</div>
<div class="r" style="left:453.50px;top:679.20px;width:87.20px;height:22.80px;background:#ffffff;border:1px solid #c8cad3;box-sizing:border-box;border-radius:4px;"></div>
<div class="t" style="left:463.95px;top:685.43px;font-size:10px;line-height:10px;color:#555968;letter-spacing:0.111px;-webkit-text-stroke:0.25px currentColor;">Variable Setup</div>
<div class="t" style="left:218.28px;top:714.11px;font-size:10.5px;line-height:10.5px;color:#3c3e47;font-weight:700;letter-spacing:0.017px;">Cost Adder</div>
<svg class="r" style="left:334.20px;top:714.30px" width="13" height="13" viewBox="0 0 13 13"><circle cx="6.5" cy="6.5" r="5.5" fill="none" stroke="#a4a7b4" stroke-width="1"/><line x1="6.5" y1="5.6" x2="6.5" y2="9.4" stroke="#a4a7b4" stroke-width="1.1"/><circle cx="6.5" cy="3.9" r="0.7" fill="#a4a7b4"/></svg>
<div class="r" style="left:353.20px;top:708.80px;width:96.60px;height:22.80px;background:#ffffff;border:1px solid #dcdde4;box-sizing:border-box;border-radius:4px;"></div>
<div class="r" style="left:353.20px;top:708.80px;width:48.60px;height:22.80px;background:#ffffff;border:1px solid #7d6ff5;box-sizing:border-box;border-radius:4px 0 0 4px;"></div>
<div class="t" style="left:370.11px;top:714.70px;font-size:9.8px;line-height:9.8px;color:#6a58f4;letter-spacing:-0.304px;-webkit-text-stroke:0.25px currentColor;">Yes</div>
<div class="t" style="left:419.21px;top:714.70px;font-size:9.8px;line-height:9.8px;color:#8a8c96;letter-spacing:0.453px;-webkit-text-stroke:0.25px currentColor;">No</div>
<div class="r" style="left:453.50px;top:708.80px;width:87.20px;height:22.80px;background:#ffffff;border:1px solid #c8cad3;box-sizing:border-box;border-radius:4px;"></div>
<div class="t" style="left:463.95px;top:714.93px;font-size:10px;line-height:10px;color:#555968;letter-spacing:0.111px;-webkit-text-stroke:0.25px currentColor;">Variable Setup</div>
<div class="t" style="left:886.27px;top:680.01px;font-size:10.5px;line-height:10.5px;color:#3c3e47;font-weight:700;letter-spacing:-0.020px;">Operational</div>
<div class="t" style="left:886.27px;top:690.91px;font-size:10.5px;line-height:10.5px;color:#3c3e47;font-weight:700;letter-spacing:-0.012px;">Optimization</div>
<svg class="r" style="left:1002.00px;top:684.70px" width="13" height="13" viewBox="0 0 13 13"><circle cx="6.5" cy="6.5" r="5.5" fill="none" stroke="#a4a7b4" stroke-width="1"/><line x1="6.5" y1="5.6" x2="6.5" y2="9.4" stroke="#a4a7b4" stroke-width="1.1"/><circle cx="6.5" cy="3.9" r="0.7" fill="#a4a7b4"/></svg>
<div class="r" style="left:1021.30px;top:679.20px;width:96.60px;height:22.80px;background:#ffffff;border:1px solid #dcdde4;box-sizing:border-box;border-radius:4px;"></div>
<div class="r" style="left:1021.30px;top:679.20px;width:48.60px;height:22.80px;background:#ffffff;border:1px solid #7d6ff5;box-sizing:border-box;border-radius:4px 0 0 4px;"></div>
<div class="t" style="left:1038.21px;top:685.20px;font-size:9.8px;line-height:9.8px;color:#6a58f4;letter-spacing:-0.304px;-webkit-text-stroke:0.25px currentColor;">Yes</div>
<div class="t" style="left:1087.31px;top:685.20px;font-size:9.8px;line-height:9.8px;color:#8a8c96;letter-spacing:0.453px;-webkit-text-stroke:0.25px currentColor;">No</div>
<div class="r" style="left:1121.30px;top:679.20px;width:87.20px;height:22.80px;background:#ffffff;border:1px solid #c8cad3;box-sizing:border-box;border-radius:4px;"></div>
<div class="t" style="left:1131.75px;top:685.43px;font-size:10px;line-height:10px;color:#555968;letter-spacing:0.111px;-webkit-text-stroke:0.25px currentColor;">Variable Setup</div>
<div class="t" style="left:886.27px;top:709.01px;font-size:10.5px;line-height:10.5px;color:#3c3e47;font-weight:700;letter-spacing:0.043px;">Multi-Supplier</div>
<div class="t" style="left:886.27px;top:719.91px;font-size:10.5px;line-height:10.5px;color:#3c3e47;font-weight:700;letter-spacing:-0.111px;">Allocation</div>
<svg class="r" style="left:1002.00px;top:714.30px" width="13" height="13" viewBox="0 0 13 13"><circle cx="6.5" cy="6.5" r="5.5" fill="none" stroke="#a4a7b4" stroke-width="1"/><line x1="6.5" y1="5.6" x2="6.5" y2="9.4" stroke="#a4a7b4" stroke-width="1.1"/><circle cx="6.5" cy="3.9" r="0.7" fill="#a4a7b4"/></svg>
<div class="r" style="left:1021.30px;top:708.80px;width:96.60px;height:22.80px;background:#ffffff;border:1px solid #dcdde4;box-sizing:border-box;border-radius:4px;"></div>
<div class="r" style="left:1021.30px;top:708.80px;width:48.60px;height:22.80px;background:#ffffff;border:1px solid #7d6ff5;box-sizing:border-box;border-radius:4px 0 0 4px;"></div>
<div class="t" style="left:1038.21px;top:714.70px;font-size:9.8px;line-height:9.8px;color:#6a58f4;letter-spacing:-0.304px;-webkit-text-stroke:0.25px currentColor;">Yes</div>
<div class="t" style="left:1087.31px;top:714.70px;font-size:9.8px;line-height:9.8px;color:#8a8c96;letter-spacing:0.453px;-webkit-text-stroke:0.25px currentColor;">No</div>
<div class="r" style="left:1121.30px;top:708.80px;width:87.20px;height:22.80px;background:#ffffff;border:1px solid #c8cad3;box-sizing:border-box;border-radius:4px;"></div>
<div class="t" style="left:1131.75px;top:714.93px;font-size:10px;line-height:10px;color:#555968;letter-spacing:0.111px;-webkit-text-stroke:0.25px currentColor;">Variable Setup</div>
<svg class="r" style="left:0;top:0" width="20" height="20" shape-rendering="crispEdges"><path d="M0,0 H17.5 A17.5,17.5 0 0 0 0,17.5 Z" fill="#000"/></svg>
<svg class="r" style="left:1540px;top:0" width="20" height="20" shape-rendering="crispEdges"><path d="M20,0 H2.5 A17.5,17.5 0 0 1 20,17.5 Z" fill="#000"/></svg>
<svg class="r" style="left:0;top:748px" width="20" height="20" shape-rendering="crispEdges"><path d="M0,20 H17.5 A17.5,17.5 0 0 1 0,2.5 Z" fill="#000"/></svg>
<svg class="r" style="left:1540px;top:748px" width="20" height="20" shape-rendering="crispEdges"><path d="M20,20 H2.5 A17.5,17.5 0 0 0 20,2.5 Z" fill="#000"/></svg>
<div class="r" style="left:1540.50px;top:229.00px;width:6.50px;height:138.30px;background:#bdbdbf;border-radius:3px;"></div>
<div class="r" style="left:201.50px;top:757.80px;width:1193.50px;height:7.00px;background:#bbbbbd;border-radius:3.5px;"></div>
</div></body></html>
